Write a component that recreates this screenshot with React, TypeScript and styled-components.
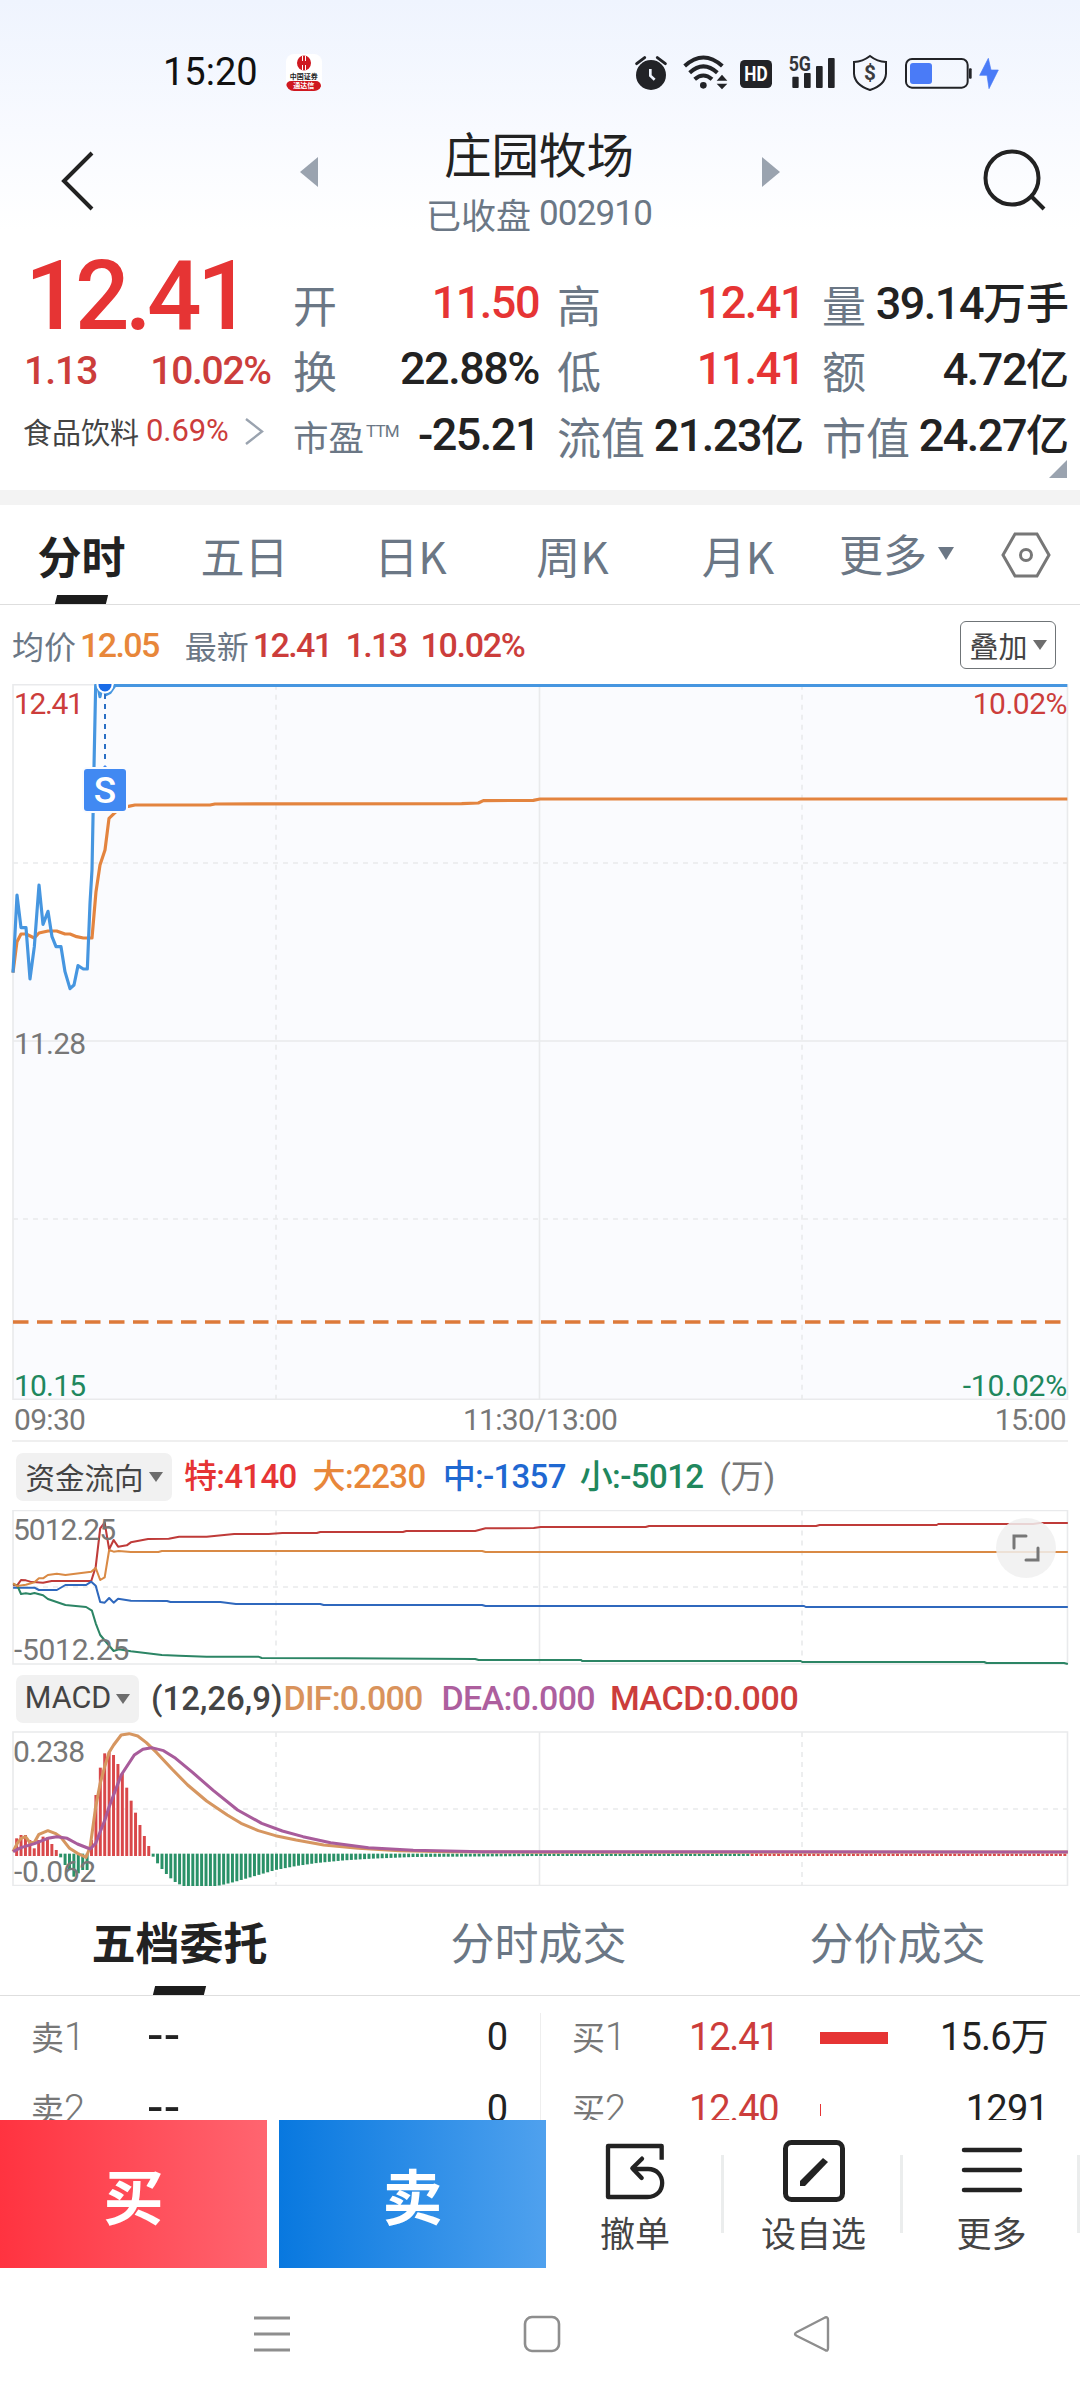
import React from "react";
import styled, { createGlobalStyle } from "styled-components";

const RED = "#e63434";
const RED_SOFT = "#cc3d3b";
const INK = "#222222";
const SLATE = "#6b7785";
const GREY = "#777777";
const GREEN = "#20875d";
const ORANGE = "#e8873a";
const BLUE = "#1f68d1";

const Global = createGlobalStyle`
  html, body { margin: 0; padding: 0; background: #fff; }
  * { box-sizing: border-box; }
  svg { display: block; flex: none; }
`;

const Screen = styled.main`
  width: 1080px;
  height: 2400px;
  overflow: hidden;
  display: flex;
  flex-direction: column;
  background: linear-gradient(180deg, #eff4fe 0, #f8faff 130px, #ffffff 230px);
  color: ${INK};
  font-family: Roboto, "Noto Sans CJK SC", sans-serif;
`;

const Text = styled.span<{
  $s: number; $c?: string; $w?: number; $ls?: number; $ml?: number; $mt?: number; $cjk?: boolean; $lh?: number;
}>`
  font-family: ${(p) => (p.$cjk ? '"Noto Sans CJK SC"' : 'Roboto, "Noto Sans CJK SC"')}, sans-serif;
  font-size: ${(p) => p.$s}px;
  line-height: ${(p) => p.$lh ?? 1.2};
  white-space: nowrap;
  color: ${(p) => p.$c ?? INK};
  font-weight: ${(p) => p.$w ?? 400};
  letter-spacing: ${(p) => p.$ls ?? 0}px;
  margin-left: ${(p) => p.$ml ?? 0}px;
  margin-top: ${(p) => p.$mt ?? 0}px;
`;

/* ---------- status bar ---------- */
const StatusBar = styled.header`
  flex: none;
  height: 142px;
  padding: 3px 60px 0 163px;
  display: flex;
  align-items: center;
`;
const AppBadge = styled.div`
  width: 36px;
  height: 37px;
  margin-left: 28px;
  border-radius: 8px;
  background: #fff;
  overflow: hidden;
  display: flex;
  flex-direction: column;
  align-items: center;
  justify-content: space-between;
`;
const BadgeName = styled.span`
  font: 700 7px/8px "Noto Sans CJK SC", sans-serif;
  color: #222;
  white-space: nowrap;
`;
const BadgeRibbon = styled.span`
  width: 35px;
  height: 10px;
  border-radius: 5px;
  background: #cf1820;
  color: #fff;
  font: 700 7px/9px "Noto Sans CJK SC", sans-serif;
  text-align: center;
`;
const StatusIcons = styled.div`
  margin-left: auto;
  height: 64px;
`;

/* ---------- title ---------- */
const TitleBar = styled.div`
  flex: none;
  height: 113px;
  display: flex;
  align-items: flex-start;
  padding: 0 34px 0 60px;
`;
const TitleBlock = styled.div`
  width: 260px;
  display: flex;
  flex-direction: column;
  align-items: center;
`;
const TitleSub = styled.div`
  display: flex;
  align-items: center;
  height: 44px;
  margin-top: 11px;
`;

/* ---------- quote ---------- */
const Quote = styled.section`
  flex: none;
  height: 235px;
  display: flex;
  padding: 0 10px 0 24px;
`;
const QuoteMain = styled.div`
  width: 269px;
  display: flex;
  flex-direction: column;
`;
const PriceLine = styled.div`
  height: 83px;
  display: flex;
  align-items: center;
`;
const ChangeLine = styled.div`
  height: 66px;
  display: flex;
  align-items: center;
`;
const SectorLine = styled.div`
  height: 54px;
  display: flex;
  align-items: center;
`;
const Metrics = styled.div`
  flex: 1;
  padding-top: 15px;
  display: grid;
  grid-template-columns: 246px 247px 247px;
  column-gap: 18px;
  grid-template-rows: 66px 66px 66px 30px;
`;
const Metric = styled.div`
  display: flex;
  align-items: center;
  justify-content: space-between;
`;
const Pair = styled.div`
  display: flex;
  align-items: flex-start;
`;
const CornerCell = styled.div`
  grid-column: 3;
  display: flex;
  justify-content: flex-end;
  align-items: flex-start;
  padding: 0 2px 0 0;
  margin-top: -8px;
`;
const Band = styled.div`
  flex: none;
  height: 15px;
  background: #f3f3f3;
`;

/* ---------- period tabs ---------- */
const Tabs = styled.nav`
  flex: none;
  height: 100px;
  display: grid;
  grid-template-columns: 163px 163px 169px 155px 176px 148px 106px;
  border-bottom: 1px solid #dedede;
  background: #fff;
`;
const Tab = styled.div`
  display: flex;
  flex-direction: column;
  align-items: center;
  justify-content: space-between;
  padding-top: 24px;
`;
const TabMore = styled.div`
  display: flex;
  align-items: center;
  padding: 0 0 2px 13px;
`;
const TabSettings = styled.div`
  display: flex;
  align-items: center;
  padding-left: 17px;
`;
const Slant = styled.i`
  width: 51px;
  height: 9px;
  background: #1c1c1c;
  transform: skewX(-14deg);
`;

/* ---------- indicator header rows ---------- */
const InfoRow = styled.div<{ $h: number; $pl: number }>`
  flex: none;
  height: ${(p) => p.$h}px;
  padding: 1px 24px 0 ${(p) => p.$pl}px;
  display: flex;
  align-items: center;
`;
const OverlayButton = styled.div`
  margin-left: auto;
  width: 96px;
  height: 48px;
  border: 1.5px solid #6f7477;
  border-radius: 6px;
  display: flex;
  align-items: center;
  justify-content: center;
  gap: 5px;
`;
const Chip = styled.div<{ $w: number }>`
  flex: none;
  width: ${(p) => p.$w}px;
  height: 48px;
  border-radius: 7px;
  background: #f1f1f1;
  display: flex;
  align-items: center;
  justify-content: center;
  gap: 5px;
`;
const Chart = styled.div<{ $h: number }>`
  flex: none;
  position: relative;
  height: ${(p) => p.$h}px;
`;
const AxisLabel = styled.span<{ $x?: number; $r?: number; $y: number; $c: string; $ls?: number }>`
  position: absolute;
  ${(p) => (p.$r !== undefined ? `right: ${p.$r}px;` : `left: ${p.$x}px;`)}
  top: ${(p) => p.$y}px;
  font-size: 30px;
  line-height: 30px;
  letter-spacing: ${(p) => p.$ls ?? -0.8}px;
  color: ${(p) => p.$c};
`;
const TradeMark = styled.div`
  position: absolute;
  left: 84px;
  top: 85px;
  width: 42px;
  height: 42px;
  border-radius: 3px;
  background: #4189f2;
  display: flex;
  align-items: center;
  justify-content: center;
  box-shadow: 0 0 0 2px #fafbff;
`;
const Expand = styled.div`
  position: absolute;
  left: 996px;
  top: 8px;
  width: 60px;
  height: 60px;
  border-radius: 50%;
  background: rgba(240, 240, 240, 0.85);
  display: flex;
  align-items: center;
  justify-content: center;
`;
const TimeAxis = styled.div`
  flex: none;
  height: 42px;
  margin: 0 12px;
  padding: 0 2px;
  border-bottom: 2px solid #efefef;
  display: grid;
  grid-template-columns: 1fr auto 1fr;
  align-items: center;
`;
const Time = styled.span<{ $right?: boolean }>`
  font-size: 30px;
  line-height: 40px;
  letter-spacing: -0.7px;
  color: ${GREY};
  text-align: ${(p) => (p.$right ? "right" : "left")};
`;

/* ---------- order book ---------- */
const BookTabs = styled.nav`
  flex: none;
  height: 110px;
  border-bottom: 1px solid #dedede;
  display: grid;
  grid-template-columns: repeat(3, 359px);
`;
const BookTab = styled(Tab)`
  padding-top: 29px;
`;
const Book = styled.section`
  flex: none;
  height: 124px;
  overflow: hidden;
  display: grid;
  grid-template-columns: 540px 540px;
`;
const Side = styled.div<{ $line?: boolean }>`
  margin-top: 17px;
  border-left: ${(p) => (p.$line ? "1px solid #eeeeee" : "0")};
`;
const Level = styled.div`
  height: 72px;
  padding: 2px 32px 0 31px;
  display: grid;
  grid-template-columns: 118px 130px 1fr auto;
  align-items: start;
`;
const Volume = styled.i`
  height: 12px;
  margin-top: 17px;
  background: ${RED};
`;

/* ---------- trade bar ---------- */
const TradeBar = styled.footer`
  flex: none;
  height: 148px;
  background: #fff;
  display: grid;
  grid-template-columns: 267px 279px 178px 179px 177px;
`;
const TradeButton = styled.div<{ $from: string; $to: string; $ml?: number }>`
  margin-left: ${(p) => p.$ml ?? 0}px;
  background: linear-gradient(90deg, ${(p) => p.$from}, ${(p) => p.$to});
  display: flex;
  align-items: center;
  justify-content: center;
`;
const Action = styled.div`
  height: 148px;
  display: flex;
  flex-direction: column;
  align-items: center;
  padding-top: 19px;
  background: linear-gradient(#ebeded, #ebeded) right 35px / 3px 78px no-repeat;
`;
const NavBar = styled.div`
  flex: none;
  height: 132px;
  background: #fff;
  display: flex;
  justify-content: space-between;
  padding: 46px 248px 0 252px;
`;

const Down = ({ w = 14, h = 10, c = "#6d6d6d" }: { w?: number; h?: number; c?: string }) => (
  <svg width={w} height={h} viewBox="0 0 14 10" preserveAspectRatio="none"><path d="M0 0h14L7 10z" fill={c} /></svg>
);

/* ---------- chart data ---------- */
const PRICE = "39,908 51,675 63,773 78,773 90,927 103,830 117,645 129,763 144,724 156,800 168,830 183,830 195,905 210,956 222,945 234,887 250,897 262,897 270,700 276,600 282,290 287,46 294,46 300,80 306,46 318,74 330,68 345,46 3202,46";
const AVERAGE = "39,908 51,815 63,792 78,792 103,804 117,789 144,783 170,783 195,792 210,792 230,800 250,804 276,804 288,665 300,585 315,540 327,445 345,428 360,410 385,409 405,405 630,405 645,402 1385,401 1435,399 1450,392 1600,391 1620,387 3202,387";

const FLOW = [
  { c: "#bf3b39", p: "38,256 50,256 61,240 75,241 88,245 125,248 150,243 265,243 278,200 291,85 304,68 317,148 330,120 343,140 368,136 380,127 430,117 490,116 520,110 600,110 680,102 780,102 820,99 920,99 930,96 1170,96 1180,93 1380,93 1410,85 1550,84 1570,81 1875,81 1885,78 2370,78 2380,75 2720,75 2725,72 3000,72 3020,69 3101,69" },
  { c: "#2f68bd", p: "38,263 100,263 113,270 165,270 190,255 250,255 265,245 278,257 291,306 304,308 317,294 330,308 343,296 380,302 485,303 495,306 640,306 685,312 930,312 940,315 1400,315 1410,318 2335,318 2340,321 3101,321" },
  { c: "#2c8565", p: "38,252 50,256 61,282 75,280 88,282 100,279 125,286 139,297 190,315 250,321 267,332 278,370 291,405 330,453 345,448 380,454 470,465 520,467 600,470 750,470 760,474 1000,475 1380,477 1390,480 1688,480 1690,483 2325,483 2330,486 2858,486 2865,489 3090,489 3101,492" },
  { c: "#d98a45", p: "38,250 50,258 75,254 100,247 113,235 125,235 139,225 165,221 190,225 265,215 278,204 291,240 304,232 317,150 330,155 345,153 380,156 460,156 470,153 1400,153 1410,156 3101,156" },
];

const DIF = "38,1055 50,1030 61,1015 74,1010 87,1028 100,1027 113,1003 139,992 160,1000 177,1012 202,1045 225,1060 250,1072 262,1040 278,920 291,850 304,800 317,757 330,735 352,705 375,701 400,708 425,728 455,758 500,808 545,855 600,903 660,945 700,970 750,992 800,1007 860,1020 940,1035 1040,1045 1160,1052 1300,1055 1568,1057 3101,1056";
const DEA = "38,1055 61,1043 100,1031 139,1015 165,1010 195,1015 225,1032 262,1047 278,1030 291,995 304,962 317,920 352,825 390,765 415,748 440,743 475,752 510,775 560,818 620,872 690,930 760,970 820,993 880,1010 960,1028 1070,1043 1200,1051 1400,1055 3101,1056";

const EARLY_BARS = [
  1015, 1005, 1005, 1020, 1045, 1020, 1010, 1012, 1032, 1050, 1072, 1095, 1108, 1130, 1120, 1110, 1110, 1020,
  885, 803, 760, 757, 765, 792, 820, 863, 902, 938, 975, 1008, 1038, 1070, 1090, 1107, 1122, 1135, 1146, 1153, 1158,
];
const TAIL = [[534, 1158], [560, 1161], [600, 1161], [640, 1156], [680, 1146], [740, 1128], [800, 1110], [860, 1098], [920, 1089], [1000, 1081], [1080, 1076], [1200, 1071], [1568, 1068], [3200, 1068]];
const tailAt = (x: number) => {
  const i = Math.max(1, TAIL.findIndex((t) => t[0] >= x));
  const [x0, y0] = TAIL[i - 1];
  const [x1, y1] = TAIL[i];
  return y0 + ((y1 - y0) * (x - x0)) / (x1 - x0);
};
const BARS = Array.from({ length: 239 }, (_, i) => {
  const x = 48 + i * 12.79;
  const v = i < EARLY_BARS.length ? EARLY_BARS[i] : tailAt(x);
  const red = v < 1061 || x > 2172;
  return { x, top: red ? Math.min(v, 1061) : 1061, bottom: red ? 1068 : v, red };
});

const Grid = ({ top, bottom, dashed, solid }: { top: number; bottom: number; dashed: number[]; solid?: number }) => (
  <g fill="none" stroke="#e9eaec" strokeWidth="1.6">
    <path d={`M13 ${top}H1067.5V${bottom}H13z`} />
    <path d={`M539.5 ${top}V${bottom}${solid ? `M13 ${solid}H1067` : ""}`} />
    <path strokeDasharray="5 5" d={`M276 ${top}V${bottom}M802 ${top}V${bottom}` + dashed.map((y) => `M13 ${y}H1067`).join("")} />
  </g>
);

const StatusGlyphs = () => (
  <svg width="400" height="64" viewBox="0 0 1200 192">
    <g fill="#222327">
      <circle cx="93" cy="102" r="45" />
      <path d="M50 68L74 50M136 68L112 50" stroke="#222327" strokeWidth="9" strokeLinecap="round" />
      <path d="M91 84v20l13 12" fill="none" stroke="#eff4fe" strokeWidth="8" />
      <g fill="none" stroke="#222327" strokeWidth="12">
        <path d="M194 75Q250 24 307 75" />
        <path d="M209 95Q250 57 292 95" />
        <path d="M224 115Q250 92 276 115" />
      </g>
      <circle cx="250" cy="133" r="10" />
      <path d="M290 119l16-18 16 18zM290 128h32l-16 17z" />
      <rect x="360" y="57" width="96" height="84" rx="14" />
      <rect x="517" y="107" width="19" height="34" rx="3" />
      <rect x="552" y="96" width="20" height="45" rx="3" />
      <rect x="588" y="75" width="20" height="66" rx="3" />
      <rect x="624" y="51" width="20" height="90" rx="3" />
      <rect x="1047" y="82" width="8" height="31" rx="3" />
    </g>
    <text x="408" y="120" fontFamily="Roboto" fontWeight="700" fontSize="60" textLength="70" lengthAdjust="spacingAndGlyphs" fill="#fff" textAnchor="middle">HD</text>
    <text x="506" y="90" fontFamily="Roboto" fontWeight="700" fontSize="60" textLength="67" lengthAdjust="spacingAndGlyphs" fill="#333438">5G</text>
    <path d="M750 45Q772 62 798 63V98Q796 132 750 147Q704 132 702 98V63Q728 62 750 45z" fill="none" stroke="#222327" strokeWidth="6" />
    <text x="750" y="117" fontFamily="Roboto" fontWeight="700" fontSize="62" fill="#3b3c40" textAnchor="middle">$</text>
    <rect x="858" y="54" width="185" height="86" rx="18" fill="none" stroke="#222327" strokeWidth="6" />
    <rect x="870" y="66" width="66" height="63" rx="9" fill="#4a7bf7" />
    <path d="M1105 52L1079 103h22l6 40 28-56h-22z" fill="#4a7bf7" stroke="#4a7bf7" strokeWidth="2" strokeLinejoin="round" />
  </svg>
);

const METRICS = [
  { k: "开", v: "11.50", red: true }, { k: "高", v: "12.41", red: true }, { k: "量", v: "39.14", unit: "万手" },
  { k: "换", v: "22.88%" }, { k: "低", v: "11.41", red: true }, { k: "额", v: "4.72", unit: "亿" },
  { k: "市盈", v: "-25.21", ttm: true }, { k: "流值", v: "21.23", unit: "亿" }, { k: "市值", v: "24.27", unit: "亿" },
];

const SELLS = [["卖1", "--", "0"], ["卖2", "--", "0"]];
const BUYS = [{ n: "买1", p: "12.41", w: 68, q: "15.6万" }, { n: "买2", p: "12.40", w: 1, q: "1291" }];

export default function App() {
  return (
    <Screen>
      <Global />
      <StatusBar>
        <Text $s={38} $c="#111" $ls={0}>15:20</Text>
        <AppBadge>
          <svg width="16" height="17" viewBox="0 0 16 17">
            <ellipse cx="8" cy="9" rx="7" ry="7.5" fill="#cf1820" />
            <path d="M6.500 2v5M9.500 2v5M6.500 11v5M9.500 11v5" stroke="#fff" strokeWidth="1" />
          </svg>
          <BadgeName>中国证券</BadgeName>
          <BadgeRibbon>通达信</BadgeRibbon>
        </AppBadge>
        <StatusIcons><StatusGlyphs /></StatusIcons>
      </StatusBar>

      <TitleBar>
        <svg width="36" height="70" viewBox="0 0 36 70"><path d="M32 11L4 39l28 28" fill="none" stroke="#222" strokeWidth="4" /></svg>
        <svg width="313" height="60" viewBox="96 142 313 60"><path d="M318 157v30l-18-15z" fill="#9aa3af" /></svg>
        <TitleBlock>
          <Text $cjk $s={47.5} $mt={-18}>庄园牧场</Text>
          <TitleSub>
            <Text $cjk $s={35} $c={SLATE}>已收盘</Text>
            <Text $s={35} $c={SLATE} $ls={-0.8} $ml={8}>002910</Text>
          </TitleSub>
        </TitleBlock>
        <svg width="311" height="70" viewBox="669 142 311 70"><path d="M762 157v30l18-15z" fill="#9aa3af" /></svg>
        <svg width="66" height="70" viewBox="980 142 66 70">
          <g fill="none" stroke="#222" strokeWidth="4"><circle cx="1012" cy="178" r="26.5" /><path d="M1031 196l13 13" /></g>
        </svg>
      </TitleBar>

      <Quote>
        <QuoteMain>
          <PriceLine><Text $s={96} $lh={0.86} $w={500} $c={RED} $ls={-4.6} $ml={1}>12.41</Text></PriceLine>
          <ChangeLine>
            <Text $s={39} $w={500} $c={RED_SOFT} $ls={-1}>1.13</Text>
            <Text $s={39} $w={500} $c={RED_SOFT} $ls={-1.3} $ml={53}>10.02%</Text>
          </ChangeLine>
          <SectorLine>
            <Text $cjk $s={29} $c="#444" $ml={-1}>食品饮料</Text>
            <Text $s={31} $c={RED_SOFT} $ml={7} $ls={-0.1}>0.69%</Text>
            <svg width="38" height="30" viewBox="0 0 38 30"><path d="M17 3l16 12.500-16 12.500" fill="none" stroke="#9aa3af" strokeWidth="2.400" /></svg>
          </SectorLine>
        </QuoteMain>
        <Metrics>
          {METRICS.map((m) => (
            <Metric key={m.k}>
              <Pair>
                <Text $cjk $s={m.ttm ? 35.5 : 44} $c={SLATE} $mt={m.ttm ? 3 : 2}>{m.k}</Text>
                {m.ttm && <Text $s={17} $c={SLATE} $ml={2} $mt={9} $ls={-0.9}>TTM</Text>}
              </Pair>
              <Text $s={45} $w={500} $c={m.red ? RED : INK} $ls={-1.5}>
                {m.v}
                {m.unit && <Text $cjk $s={43} $w={500}>{m.unit}</Text>}
              </Text>
            </Metric>
          ))}
          <CornerCell><svg width="18" height="18"><path d="M18 0v18H0z" fill="#9aa3af" /></svg></CornerCell>
        </Metrics>
      </Quote>
      <Band />

      <Tabs>
        <Tab><Text $cjk $s={44} $w={700}>分时</Text><Slant /></Tab>
        <Tab><Text $cjk $s={44} $c={SLATE}>五日</Text></Tab>
        <Tab><Text $cjk $s={44} $c={SLATE}>日K</Text></Tab>
        <Tab><Text $cjk $s={44} $c={SLATE}>周K</Text></Tab>
        <Tab><Text $cjk $s={44} $c={SLATE}>月K</Text></Tab>
        <TabMore><Text $cjk $s={44} $c={SLATE}>更多</Text><svg width="28" height="13" viewBox="0 0 28 13"><path d="M11 0h16l-8 13z" fill={SLATE} /></svg></TabMore>
        <TabSettings>
          <svg width="89" height="50" viewBox="0 0 89 50"><g fill="none" stroke="#777" strokeWidth="3"><path d="M24 4h22l12 21-12 21H24L12 25z" /><circle cx="35" cy="25" r="5.500" /></g></svg>
        </TabSettings>
      </Tabs>

      <InfoRow $h={79} $pl={12}>
        <Text $cjk $s={32} $c={SLATE}>均价</Text>
        <Text $s={34} $w={500} $c={ORANGE} $ls={-1.6} $ml={4}>12.05</Text>
        <Text $cjk $s={32} $c={SLATE} $ml={26}>最新</Text>
        <Text $s={34} $w={500} $c={RED_SOFT} $ls={-1.6} $ml={4}>12.41</Text>
        <Text $s={34} $w={500} $c={RED_SOFT} $ls={-1.6} $ml={14}>1.13</Text>
        <Text $s={34} $w={500} $c={RED_SOFT} $ls={-1.3} $ml={14}>10.02%</Text>
        <OverlayButton><Text $cjk $s={29} $c="#444">叠加</Text><Down /></OverlayButton>
      </InfoRow>

      <Chart $h={716}>
        <svg width="1080" height="716" viewBox="0 684 1080 716">
          <g transform="translate(0 670) scale(.33333)">
            <polygon points={`39,2188 ${PRICE} 3202,2188`} fill="#fafbfe" />
          </g>
          <Grid top={684.800} bottom={1399.300} dashed={[863, 1219]} solid={1041} />
          <path d="M13 1322H1063" stroke="#dd7a3a" strokeWidth="3.500" strokeDasharray="15.500 8.500" />
          <g transform="translate(0 670) scale(.33333)" fill="none" strokeWidth="9.500" strokeLinejoin="round">
            <polyline points={AVERAGE} stroke="#e3843f" />
            <polyline points={PRICE} stroke="#4696e0" />
          </g>
          <path d="M105 694V764" stroke="#2b6fc4" strokeWidth="2" strokeDasharray="5 5" />
          <circle cx="105" cy="685" r="7.500" fill="#1a6ce8" stroke="#fff" strokeWidth="2" />
          <path d="M100 770l5-5 5 5z" fill="#4189f2" />
        </svg>
        <TradeMark><Text $s={37} $w={500} $c="#fff" $mt={3}>S</Text></TradeMark>
        <AxisLabel $x={14} $y={5} $c={RED_SOFT} $ls={-1.4}>12.41</AxisLabel>
        <AxisLabel $r={13} $y={5} $c={RED_SOFT} $ls={-0.5}>10.02%</AxisLabel>
        <AxisLabel $x={14} $y={345} $c={GREY}>11.28</AxisLabel>
        <AxisLabel $x={14} $y={687} $c={GREEN}>10.15</AxisLabel>
        <AxisLabel $r={13} $y={687} $c={GREEN} $ls={-0.2}>-10.02%</AxisLabel>
      </Chart>
      <TimeAxis><Time>09:30</Time><Time>11:30/13:00</Time><Time $right>15:00</Time></TimeAxis>

      <InfoRow $h={68} $pl={16}>
        <Chip $w={156}><Text $cjk $s={29.5} $c="#444">资金流向</Text><Down /></Chip>
        <Text $s={33} $w={500} $c={RED} $ls={-0.7} $ml={12}>特:4140</Text>
        <Text $s={33} $w={500} $c={ORANGE} $ls={-0.6} $ml={16}>大:2230</Text>
        <Text $s={33} $w={500} $c={BLUE} $ls={-0.7} $ml={17}>中:-1357</Text>
        <Text $s={33} $w={500} $c={GREEN} $ls={-0.6} $ml={14}>小:-5012</Text>
        <Text $s={33} $c={GREY} $ml={16}>(万)</Text>
      </InfoRow>

      <Chart $h={155}>
        <svg width="1080" height="155" viewBox="0 1510 1080 155">
          <Grid top={1510.500} bottom={1664} dashed={[1587]} />
          <g transform="translate(0 1500) scale(.34435 .33333)" fill="none" strokeWidth="6" strokeLinejoin="round">
            {FLOW.map((f) => <polyline key={f.c} points={f.p} stroke={f.c} />)}
          </g>
        </svg>
        <AxisLabel $x={13} $y={5} $c={GREY} $ls={-1}>5012.25</AxisLabel>
        <AxisLabel $x={14} $y={125} $c={GREY} $ls={-0.3}>-5012.25</AxisLabel>
        <Expand>
          <svg width="30" height="30" viewBox="0 0 30 30"><path d="M3 15V3h12M27 15v12H15" fill="none" stroke="#777" strokeWidth="3" strokeLinecap="round" /></svg>
        </Expand>
      </Chart>

      <InfoRow $h={66} $pl={16}>
        <Chip $w={123}><Text $s={30.5} $c="#444">MACD</Text><Down /></Chip>
        <Text $s={33} $w={500} $c="#444" $ml={12}>(12,26,9)</Text>
        <Text $s={34} $w={500} $c="#d9935c" $ml={1} $ls={-0.8}>DIF:0.000</Text>
        <Text $s={34} $w={500} $c="#ad5f9e" $ml={19} $ls={-0.7}>DEA:0.000</Text>
        <Text $s={34} $w={500} $c={RED_SOFT} $ml={15} $ls={-0.4}>MACD:0.000</Text>
      </InfoRow>

      <Chart $h={155}>
        <svg width="1080" height="155" viewBox="0 1731 1080 155">
          <Grid top={1732} bottom={1885.500} dashed={[1809]} />
          <g transform="translate(0 1500) scale(.34435 .33333)" fill="none" strokeLinejoin="round">
            {BARS.map((b) => (
              <rect key={b.x} x={b.x - 4} y={b.top} width="8.600" height={b.bottom - b.top} fill={b.red ? "#d9484a" : "#2a9168"} />
            ))}
            <polyline points={DIF} stroke="#d69660" strokeWidth="9" />
            <polyline points={DEA} stroke="#a85c9b" strokeWidth="9" />
          </g>
        </svg>
        <AxisLabel $x={13} $y={6} $c={GREY} $ls={-0.8}>0.238</AxisLabel>
        <AxisLabel $x={14} $y={126} $c={GREY} $ls={-0.3}>-0.062</AxisLabel>
      </Chart>

      <BookTabs>
        <BookTab><Text $cjk $s={44} $w={700}>五档委托</Text><Slant /></BookTab>
        <BookTab><Text $cjk $s={44} $c={SLATE}>分时成交</Text></BookTab>
        <BookTab><Text $cjk $s={44} $c={SLATE}>分价成交</Text></BookTab>
      </BookTabs>
      <Book>
        <Side>
          {SELLS.map(([n, p, q]) => (
            <Level key={n}>
              <Text $s={38} $w={300} $c={GREY}><Text $cjk $s={33} $c={GREY}>{n[0]}</Text>{n[1]}</Text>
              <Text $s={52} $lh={0.8} $ls={2.5} $ml={-1}>{p}</Text>
              <span />
              <Text $s={38}>{q}</Text>
            </Level>
          ))}
        </Side>
        <Side $line>
          {BUYS.map((b) => (
            <Level key={b.n}>
              <Text $s={38} $w={300} $c={GREY}><Text $cjk $s={33} $c={GREY}>{b.n[0]}</Text>{b.n[1]}</Text>
              <Text $s={38} $c={RED_SOFT} $ls={-1.2} $ml={-1}>{b.p}</Text>
              <Volume style={{ width: b.w }} />
              <Text $s={38} $ls={-0.8}>{b.q}</Text>
            </Level>
          ))}
        </Side>
      </Book>

      <TradeBar>
        <TradeButton $from="#ff3340" $to="#ff6570"><Text $cjk $s={60} $w={700} $c="#fff">买</Text></TradeButton>
        <TradeButton $from="#0878df" $to="#4fa1ee" $ml={12}><Text $cjk $s={60} $w={700} $c="#fff">卖</Text></TradeButton>
        <Action>
          <svg width="64" height="64" viewBox="0 0 192 192">
            <g transform="translate(-45 -36)" fill="none" stroke="#222" strokeWidth="13" strokeLinejoin="round">
              <path d="M221 98V57H60V210H178C238 210 236 126 180 126H134" />
              <path d="M162 95L133 124L161 153" strokeLinecap="round" />
            </g>
          </svg>
          <Text $cjk $s={35} $c="#444" $mt={8}>撤单</Text>
        </Action>
        <Action>
          <svg width="64" height="64" viewBox="0 0 64 64">
            <rect x="3.500" y="3.500" width="57" height="57" rx="6" fill="none" stroke="#222" strokeWidth="5" />
            <path d="M18 47v-5L41 19l5 4L23 47z" fill="#222" />
          </svg>
          <Text $cjk $s={35} $c="#444" $mt={8}>设自选</Text>
        </Action>
        <Action>
          <svg width="64" height="64" viewBox="0 0 64 64"><path d="M4 11h56M4 31h56M4 51h56" stroke="#222" strokeWidth="4.500" strokeLinecap="round" /></svg>
          <Text $cjk $s={35} $c="#444" $mt={8}>更多</Text>
        </Action>
      </TradeBar>

      <NavBar>
        <svg width="40" height="40" viewBox="0 0 40 40"><path d="M2 4h36M2 20h36M2 36h36" stroke="#8e8e8e" strokeWidth="3" /></svg>
        <svg width="40" height="40" viewBox="0 0 40 40"><rect x="3" y="3" width="34" height="34" rx="7" fill="none" stroke="#8e8e8e" strokeWidth="2.600" /></svg>
        <svg width="40" height="40" viewBox="0 0 40 40"><path d="M33 3.500Q36 2.500 36 6V34Q36 38 33 36L5 22Q1 20 5 18z" fill="none" stroke="#8e8e8e" strokeWidth="2.400" /></svg>
      </NavBar>
    </Screen>
  );
}
